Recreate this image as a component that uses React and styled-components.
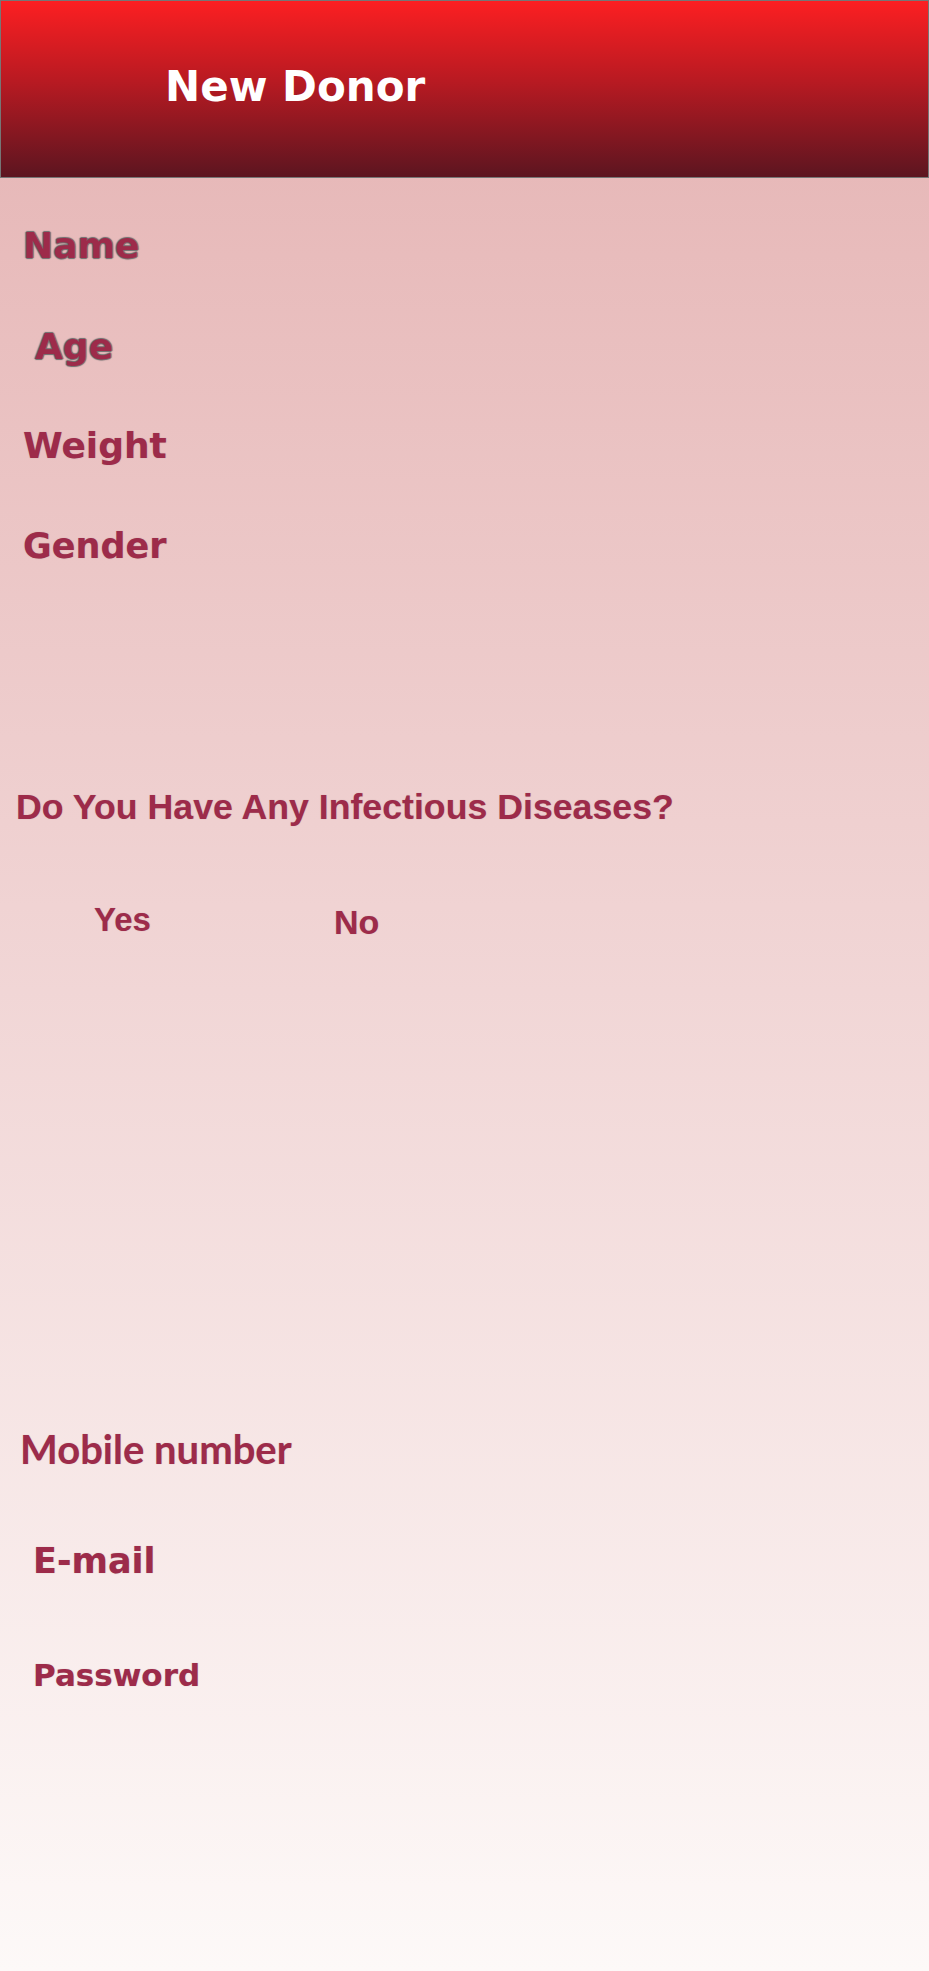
import React from 'react'
import styled, {createGlobalStyle} from 'styled-components'

const GlobalStyle = createGlobalStyle`
  html, body {
    margin: 0;
    padding: 0;
  }
  body {
    font-family: "DejaVu Sans", sans-serif;
  }
`

const NewDonor = () => {
  return (
    <Page>
      <GlobalStyle />
      <Header>
        <Title>New Donor</Title>
      </Header>
      <Form>
        <Label $top={50} $outline="dark">Name</Label>
        <Label $top={65} $indent={35} $outline="dark">Age</Label>
        <Label $top={63}>Weight</Label>
        <Label $top={65} $size={35}>Gender</Label>

        <Question>Do You Have Any Infectious Diseases?</Question>
        <Choices>
          <Choice $size={33}>Yes</Choice>
          <Choice $size={34} $shift={2} $left={336}>No</Choice>
        </Choices>

        <MobileLabel>Mobile number</MobileLabel>
        <Label $top={75} $indent={33} $size={35}>E-mail</Label>
        <Label $top={81} $indent={33} $size={31}>Password</Label>
      </Form>
    </Page>
  )
}

export default NewDonor

const Page = styled.div`
  min-height: 1971px;
  display: flex;
  flex-direction: column;
  background: linear-gradient(180deg, #e5b3b3 0%, #f0d3d3 46%, #fdf9f8 100%);
  color: #9d2b4a;
`

const Header = styled.div`
  height: 178px;
  box-sizing: border-box;
  border: 1px solid #767676;
  background: linear-gradient(180deg, #fc1f22 0%, #b91a22 45%, #5c1520 100%);
  display: flex;
  align-items: center;
  padding-left: 164px;
`

const Title = styled.h1`
  margin: 0;
  font-size: 42px;
  line-height: 1;
  font-weight: bold;
  color: #fff;
  margin-bottom: 4px;
`

const Form = styled.div`
  display: flex;
  flex-direction: column;
  align-items: flex-start;
`

const Label = styled.label`
  display: block;
  margin-top: ${p => p.$top || 0}px;
  padding-left: ${p => p.$indent || 23}px;
  font-size: ${p => p.$size || 36}px;
  line-height: 1;
  font-weight: bold;
  text-shadow: ${p => p.$outline === 'dark'
    ? '1px 0 1px #6f6f6f, -1px 0 1px #6f6f6f, 0 1px 1px #6f6f6f, 0 -1px 1px #6f6f6f'
    : '0 0 1px rgba(120, 90, 95, 0.45)'};
`

const Question = styled.div`
  margin-top: 226px;
  padding-left: 16px;
  font-family: "Liberation Sans", Arial, sans-serif;
  font-size: 35.7px;
  line-height: 1;
  font-weight: bold;
  text-shadow: 0 0 1px rgba(120, 90, 95, 0.4);
`

const Choices = styled.div`
  display: flex;
  align-items: flex-start;
  margin-top: 77px;
  padding-left: 94px;
`

const Choice = styled.span`
  font-family: "Liberation Sans", Arial, sans-serif;
  font-size: ${p => p.$size}px;
  line-height: 1;
  font-weight: bold;
  margin-top: ${p => p.$shift || 0}px;
  margin-left: ${p => (p.$left ? p.$left - 94 - 59 : 0)}px;
  text-shadow: 0 0 1px rgba(120, 90, 95, 0.4);
`

const MobileLabel = styled.div`
  margin-top: 490px;
  padding-left: 20px;
  font-family: Lato, "Open Sans", sans-serif;
  font-size: 40px;
  line-height: 1;
  font-weight: bold;
  text-shadow: 0 0 1px rgba(120, 90, 95, 0.4);
`
